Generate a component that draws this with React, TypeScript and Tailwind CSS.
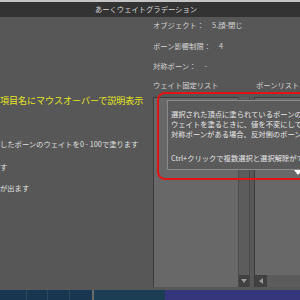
const jp = "font-['Noto_Sans_CJK_JP','Noto_Sans',sans-serif]";

function InfoRow({ label, value, className }: { label: string; value: string; className?: string }) {
  return (
    <div className={`flex h-[10px] items-center text-[7.3px] leading-[10px] text-[#d4d4d4] ${className ?? ""}`}>
      <span>{label}</span>
      <span className="ml-[8px]">{value}</span>
    </div>
  );
}

function ListBox({ vertical }: { vertical?: boolean }) {
  return (
    <div className="flex h-full flex-col border-l border-t border-[#3c3c3c]">
      <div className="flex-1 bg-[#686868]" />
      {vertical ? null : (
        <div className="flex h-[12px] bg-[#5c5c5c]">
          <div className="flex w-[12px] items-center justify-center bg-[#404040]">
            <div className="h-0 w-0 border-y-[3px] border-r-[4px] border-y-transparent border-r-[#9a9a9a]" />
          </div>
        </div>
      )}
    </div>
  );
}

export default function App() {
  return (
    <div className={`relative flex h-[300px] w-[300px] flex-col overflow-hidden bg-[#575757] ${jp}`}>
      <div className="h-[2px] bg-[#c4c4c4]" />
      <div className="flex h-[15px] items-center justify-center bg-[#333333] pr-[8px] text-[7.3px] text-[#dcdcdc]">
        あーくウェイトグラデーション
      </div>

      <div className="flex h-[273px]">
        <div className="flex w-[150px] flex-col overflow-hidden whitespace-nowrap">
          <div className="mt-[78px] h-[12px] text-[9px] leading-[12px] text-[#e6e61e]">
            項目名にマウスオーバーで説明表示
          </div>
          <div className="mt-[32px] h-[10px] text-[7.3px] leading-[10px] text-[#e0e0e0]">
            したボーンのウェイトを0 - 100で塗ります
          </div>
          <div className="mt-[13px] h-[10px] text-[7.3px] leading-[10px] text-[#e0e0e0]">す</div>
          <div className="mt-[11px] h-[10px] text-[7.3px] leading-[10px] text-[#e0e0e0]">が出ます</div>
        </div>

        <div className="flex flex-1 flex-col pl-[3px]">
          <InfoRow className="mt-[3px]" label="オブジェクト：" value="5.顔-閉じ" />
          <InfoRow className="mt-[11px]" label="ボーン影響制限：" value="4" />
          <InfoRow className="mt-[10px]" label="対称ボーン：" value="-" />
          <div className="mt-[9px] flex h-[10px] items-center text-[7.3px] leading-[10px] text-[#d4d4d4]">
            <span className="w-[103px]">ウェイト固定リスト</span>
            <span>ボーンリスト</span>
          </div>

          <div className="mt-[7px] flex h-[190px]">
            <div className="flex w-[97px]">
              <div className="w-[85px]">
                <ListBox vertical />
              </div>
              <div className="flex w-[12px] flex-col border-x border-[#4a4a4a] bg-[#5c5c5c]">
                <div className="flex-1" />
                <div className="flex h-[12px] items-center justify-center bg-[#404040]">
                  <div className="h-0 w-0 border-x-[3px] border-t-[4px] border-x-transparent border-t-[#9a9a9a]" />
                </div>
              </div>
            </div>
            <div className="ml-[4px] flex-1">
              <ListBox />
            </div>
          </div>
        </div>
      </div>

      <div className="flex h-[10px]">
        <div className="flex w-[92px] bg-[#183650]">
          <div className="w-[27px] border-r border-[#2a4a62]" />
          <div className="w-[21px] border-r border-[#2a4a62]" />
          <div className="w-[22px] border-r border-[#2a4a62]" />
        </div>
        <div className="w-[2px] bg-[#6a6a6a]" />
        <div className="w-[71px] bg-[#1c3e55]" />
        <div className="flex-1 bg-[#35367c]" />
      </div>

      <div className="absolute left-[157px] top-[92px] h-[88px] w-[160px] rounded-[8px] border-2 border-[#e01414]" />

      <div className="absolute left-[167px] top-[100px] h-[70px] w-[150px] border border-[#8c8c8c] bg-[#5b5b5b] pl-[3px] pt-[8px] text-[7.3px] leading-[10px] whitespace-nowrap text-[#e8e8e8]">
        <div>選択された頂点に塗られているボーンのウェイトを表示します</div>
        <div>ウェイトを塗るときに、値を不変にしておくボーンを選択します</div>
        <div>対称ボーンがある場合、反対側のボーンも固定されます</div>
        <div className="mt-[14px]">Ctrl+クリックで複数選択と選択解除ができます</div>
      </div>

      <div className="absolute left-[294px] top-[170px] h-0 w-0 border-x-[4px] border-t-[5px] border-x-transparent border-t-white" />
    </div>
  );
}
